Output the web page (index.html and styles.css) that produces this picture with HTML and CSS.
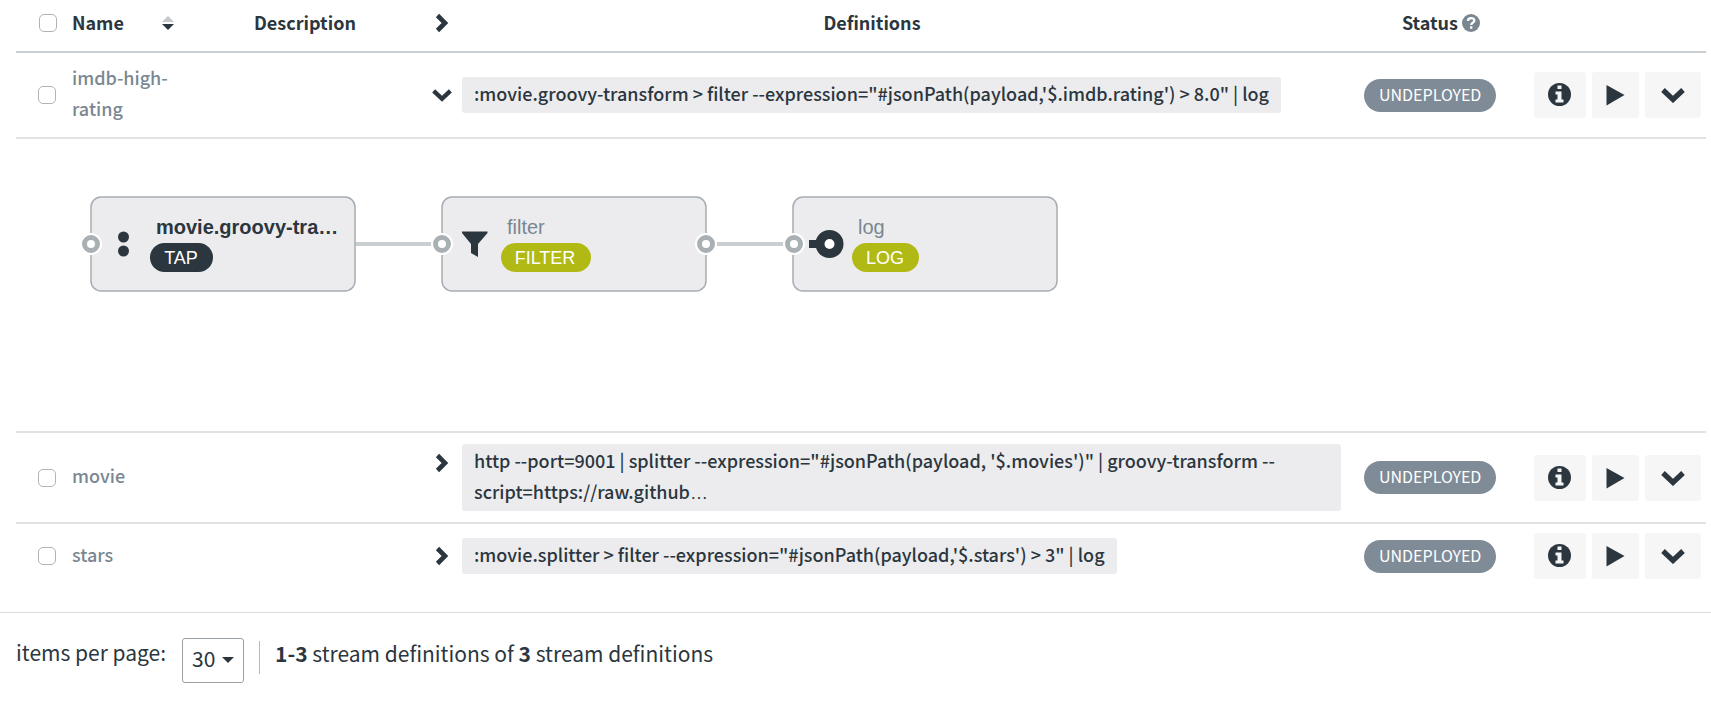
FILE: index.html
```html
<!DOCTYPE html>
<html lang="en">
<head>
<meta charset="utf-8">
<title>Stream definitions</title>
<link rel="stylesheet" href="styles.css">
</head>
<body>
<svg class="sprite" aria-hidden="true">
  <symbol id="chevron-right" viewBox="0 0 14 20"><path d="M2.500 2.500 10 10l-7.500 7.500" fill="none" stroke="currentColor" stroke-width="4.600"/></symbol>
  <symbol id="chevron-down" viewBox="0 0 24 16"><path d="M2 3l10 9.500L22 3" fill="none" stroke="currentColor" stroke-width="5.200"/></symbol>
  <symbol id="info" viewBox="0 0 24 24"><circle cx="11.500" cy="11.500" r="11.500" fill="currentColor"/><path d="M9.500 2.500h4v3.600h-4zM7.500 8.500h6v8h2v3h-8v-3h2v-5h-2z" fill="#f6f6f7"/></symbol>
  <symbol id="play" viewBox="0 0 20 22"><path d="M.500 1 18.500 11 .500 21.500z" fill="currentColor"/></symbol>
  <symbol id="help" viewBox="0 0 18 18"><circle cx="9" cy="9" r="9" fill="currentColor"/><path d="M6 7c0-4 6.500-3.800 6.300-.300C12.200 8.700 9.200 8.700 9.200 11M9.200 12.200v2.600" fill="none" stroke="#fff" stroke-width="2.300"/></symbol>
</svg>
<main>
  <table class="streams">
    <colgroup>
      <col class="col-check"><col class="col-name"><col class="col-description"><col class="col-toggle"><col><col class="col-status"><col class="col-actions">
    </colgroup>
    <thead>
      <tr>
        <th class="check head-check"><input type="checkbox" aria-label="Select all"></th>
        <th class="name-head"><button class="sort" type="button">Name
          <svg width="12" height="16" viewBox="0 0 12 16"><path d="M6 1l6 6H0z" fill="#c3c9cd"/><path d="M0 9h12l-6 6z" fill="#2b363e"/></svg></button></th>
        <th>Description</th>
        <th class="toggle"><button type="button" aria-label="Expand all"><svg width="14" height="20"><use href="#chevron-right"/></svg></button></th>
        <th class="definitions">Definitions</th>
        <th>Status <svg class="help" width="18" height="18"><use href="#help"/></svg></th>
        <th></th>
      </tr>
    </thead>
    <tbody>
      <tr>
        <td class="check"><input type="checkbox" aria-label="Select imdb-high-rating"></td>
        <td class="name"><a href="#">imdb-high-rating</a></td>
        <td></td>
        <td class="toggle"><button type="button" aria-label="Collapse"><svg width="20" height="14"><use href="#chevron-down"/></svg></button></td>
        <td class="definition"><code>:movie.groovy-transform &gt; filter --expression="#jsonPath(payload,'$.imdb.rating') &gt; 8.0" | log</code></td>
        <td class="status"><span>UNDEPLOYED</span></td>
        <td class="actions"><div>
          <button type="button" class="b-info" aria-label="Details"><svg width="24" height="24"><use href="#info"/></svg></button>
          <button type="button" class="b-play" aria-label="Deploy"><svg width="20" height="22"><use href="#play"/></svg></button>
          <button type="button" class="b-more" aria-label="More"><svg width="24" height="16"><use href="#chevron-down"/></svg></button>
        </div></td>
      </tr>
      <tr>
        <td class="graph" colspan="7">
          <svg width="1100" height="292" viewBox="16 139 1100 292">
            <g class="link"><path d="M355 244h87M706 244h88"/></g>
            <g class="node">
              <rect x="91" y="197" width="264" height="94" rx="10"/>
              <rect x="442" y="197" width="264" height="94" rx="10"/>
              <rect x="793" y="197" width="264" height="94" rx="10"/>
            </g>
            <g class="port-halo"><circle cx="91" cy="244" r="11"/><circle cx="442" cy="244" r="11"/><circle cx="706" cy="244" r="11"/><circle cx="794" cy="244" r="11"/></g>
            <g class="port"><circle cx="91" cy="244" r="6.500"/><circle cx="442" cy="244" r="6.500"/><circle cx="706" cy="244" r="6.500"/><circle cx="794" cy="244" r="6.500"/></g>
            <g class="glyph">
              <circle cx="123.500" cy="237" r="5.500"/><circle cx="123.500" cy="251" r="5.500"/>
              <path d="M462 231.500h25.500v1.500L478 244v13l-7-4v-9l-9-11z"/>
              <path d="M809 240h10v8h-10z"/><circle class="sink" cx="829.500" cy="244" r="9.500"/>
            </g>
            <text class="title strong" x="156" y="234">movie.groovy-tra…</text>
            <text class="title" x="507" y="234">filter</text>
            <text class="title" x="858" y="234">log</text>
            <rect class="tag-dark" x="150" y="243" width="63" height="29" rx="14.500"/>
            <rect class="tag" x="501" y="243" width="90" height="29" rx="14.500"/>
            <rect class="tag" x="852" y="243" width="67" height="29" rx="14.500"/>
            <g class="tag-text"><text x="181" y="264">TAP</text><text x="545" y="264">FILTER</text><text x="885" y="264">LOG</text></g>
          </svg>
        </td>
      </tr>
      <tr>
        <td class="check"><input type="checkbox" aria-label="Select movie"></td>
        <td class="name"><a href="#">movie</a></td>
        <td></td>
        <td class="toggle top"><button type="button" aria-label="Expand"><svg width="14" height="20"><use href="#chevron-right"/></svg></button></td>
        <td class="definition"><code>http --port=9001 | splitter --expression="#jsonPath(payload, '$.movies')" | groovy-transform --<wbr>script=https://raw.github<span class="ellipsis">…</span></code></td>
        <td class="status"><span>UNDEPLOYED</span></td>
        <td class="actions"><div>
          <button type="button" class="b-info" aria-label="Details"><svg width="24" height="24"><use href="#info"/></svg></button>
          <button type="button" class="b-play" aria-label="Deploy"><svg width="20" height="22"><use href="#play"/></svg></button>
          <button type="button" class="b-more" aria-label="More"><svg width="24" height="16"><use href="#chevron-down"/></svg></button>
        </div></td>
      </tr>
      <tr>
        <td class="check"><input type="checkbox" aria-label="Select stars"></td>
        <td class="name"><a href="#">stars</a></td>
        <td></td>
        <td class="toggle"><button type="button" aria-label="Expand"><svg width="14" height="20"><use href="#chevron-right"/></svg></button></td>
        <td class="definition"><code>:movie.splitter &gt; filter --expression="#jsonPath(payload,'$.stars') &gt; 3" | log</code></td>
        <td class="status"><span>UNDEPLOYED</span></td>
        <td class="actions"><div>
          <button type="button" class="b-info" aria-label="Details"><svg width="24" height="24"><use href="#info"/></svg></button>
          <button type="button" class="b-play" aria-label="Deploy"><svg width="20" height="22"><use href="#play"/></svg></button>
          <button type="button" class="b-more" aria-label="More"><svg width="24" height="16"><use href="#chevron-down"/></svg></button>
        </div></td>
      </tr>
    </tbody>
  </table>
</main>
<footer>
  <label for="page-size">items per page:</label>
  <div class="select">
    <select id="page-size"><option>30</option><option>50</option></select>
    <svg width="12" height="6" viewBox="0 0 12 6"><path d="M0 0h12L6 6z" fill="#2b363e"/></svg>
  </div>
  <p><b>1-3</b> stream definitions of <b>3</b> stream definitions</p>
</footer>
</body>
</html>
```
FILE: styles.css
```css
* { box-sizing: border-box; }
body {
  margin: 0;
  background: #fff;
  color: #2b363e;
  font: 18px/31px "Noto Sans CJK SC", "Noto Sans", sans-serif;
}
.sprite { position: absolute; width: 0; height: 0; }
button, select { font: inherit; color: inherit; border: 0; background: none; padding: 0; }
button { cursor: pointer; }
button svg { display: block; }
main { padding: 0 5px 0 16px; }
.streams { width: 100%; table-layout: fixed; border-collapse: separate; border-spacing: 0; }
.col-check { width: 48px; }
.col-name { width: 118px; }
.col-description { width: 246px; }
.col-toggle { width: 26px; }
.col-status { width: 170px; }
.col-actions { width: 180px; }
th { height: 53px; padding: 0 8px 6px; border-bottom: 2px solid #c9ced2; font-weight: 700; }
td { padding: 11px 8px; border-bottom: 2px solid #e0e2e4; vertical-align: middle; }
tbody tr:last-child td { border-bottom: 0; }
.check { padding-left: 22px; padding-right: 0; text-align: left; }
.head-check { padding-left: 23px; }
input {
  appearance: none;
  display: block;
  width: 18px;
  height: 18px;
  margin: 0;
  border: 1px solid #aeb4b8;
  border-radius: 5px;
  background: #fff;
}
.sort { display: flex; width: 100%; align-items: center; justify-content: space-between; font-weight: 700; }
.name { padding-top: 9px; padding-bottom: 13px; font-weight: 500; }
.name a { color: #7a8791; text-decoration: none; }
.toggle { padding-left: 0; padding-right: 0; }
.toggle button { display: grid; place-items: center; width: 28px; height: 31px; }
.toggle.top { padding-top: 14px; vertical-align: top; }
.definitions { padding-right: 74px; }
.help { color: #7a8791; vertical-align: -2px; }
.definition { padding: 11px 15px 11px 8px; }
code { display: block; width: fit-content; padding: 1px 12px 4px; border-radius: 3px; background: #ececee; font: inherit; font-weight: 500; }
.ellipsis { font-family: "Liberation Sans", sans-serif; line-height: 1; }
.status span {
  display: block;
  width: fit-content;
  padding: 0 15px 2px;
  border-radius: 17px;
  background: #7f8b96;
  color: #fff;
  font-size: 16px;
  line-height: 31px;
}
.actions { padding: 9px 5px 9px 8px; }
.actions div { display: flex; gap: 6px; }
.actions button { display: grid; place-items: center; height: 46px; border-radius: 3px; background: #f6f6f7; }
.b-info { width: 52px; }
.b-play { width: 47px; }
.b-more { width: 56px; }
.graph { padding: 0; }
.graph svg { display: block; }
.link path { stroke: #c9ced1; stroke-width: 4; }
.node rect { fill: #ececee; stroke: #a6adb1; stroke-width: 1.5; }
.port-halo circle { fill: #fff; }
.port circle { fill: #fff; stroke: #a9b0b4; stroke-width: 5; }
.glyph { fill: #2b363e; }
.glyph .sink { fill: #fff; stroke: #2b363e; stroke-width: 9; }
.title { font: 20px "Liberation Sans", sans-serif; fill: #7a8791; }
.strong { font-weight: 700; fill: #2b363e; }
.tag { fill: #b1b914; }
.tag-dark { fill: #2b363e; }
.tag-text { font: 18px "Liberation Sans", sans-serif; fill: #fff; text-anchor: middle; }
footer {
  display: flex;
  align-items: flex-start;
  margin-top: 24px;
  padding: 25px 16px 16px;
  border-top: 1px solid #dadde0;
  font-size: 21px;
}
label { line-height: 28px; }
.select { position: relative; margin-left: 16px; }
select { appearance: none; display: block; width: 62px; height: 45px; padding: 0 0 5px 9px; border: 1px solid #9aa2a8; border-radius: 3px; background: #fff; }
.select svg { position: absolute; right: 10px; top: 19px; pointer-events: none; }
p { margin: 3px 0 0 15px; padding: 0 0 9px 15px; border-left: 1px solid #b5bbc0; line-height: 24px; }
```
